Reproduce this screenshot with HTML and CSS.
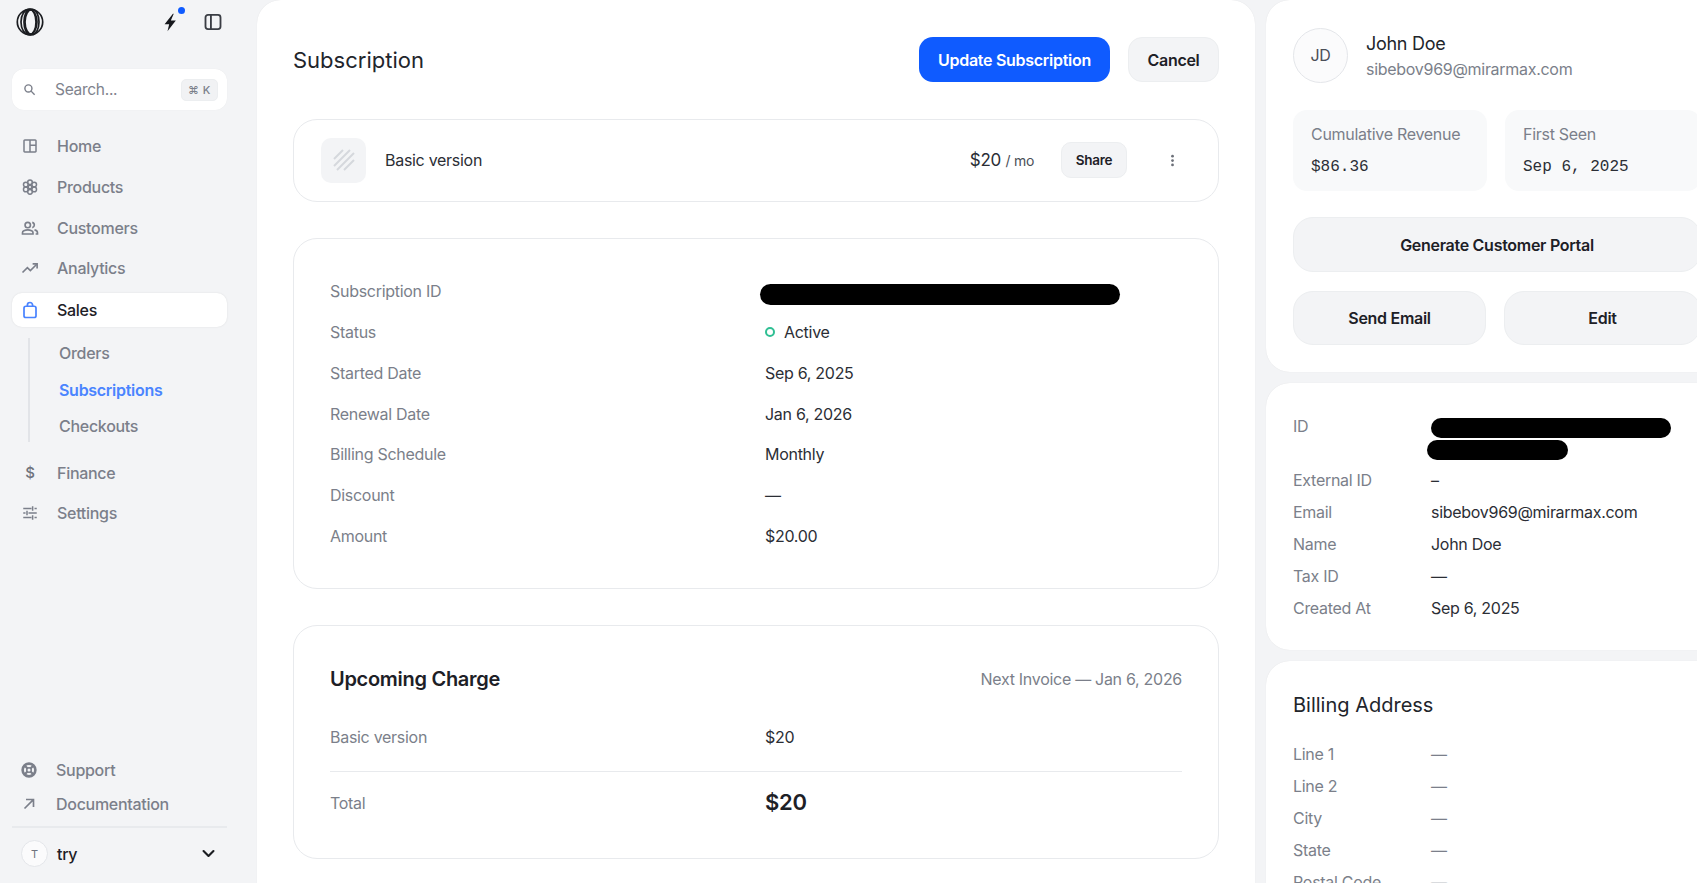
FILE: index.html
```html
<!DOCTYPE html>
<html lang="en">
<head>
<meta charset="utf-8">
<title>Subscription</title>
<link rel="stylesheet" href="styles.css">
</head>
<body>
<div class="app">
  <aside class="sidebar">
    <div class="brand">
      <svg class="logo" viewBox="0 0 28 28" fill="none" stroke="#1b1d21" stroke-width="1.7"><circle cx="14" cy="14" r="12.7"/><ellipse cx="13" cy="14" rx="8" ry="12.7"/><ellipse cx="14" cy="14" rx="6" ry="12.7"/><ellipse cx="16" cy="14" rx="7" ry="12.7"/></svg>
      <span class="bolt-wrap">
        <svg class="bolt" viewBox="0 0 24 24"><path fill="#16181d" d="M15.500 1.500 5.500 14H11l-2 8.500 10-13h-6l3.500-8z"/></svg>
        <i class="dot"></i>
      </span>
      <svg class="panel-icon" viewBox="0 0 24 24" fill="none" stroke="#3a3d44" stroke-width="2.200"><rect x="3" y="3.500" width="18" height="17" rx="3"/><path d="M9.500 3.500v17"/></svg>
    </div>
    <div class="search">
      <svg class="ic-search" viewBox="0 0 24 24" fill="none" stroke="#7b7f8a" stroke-width="2.600"><circle cx="10" cy="10" r="6.500"/><path d="m15 15 6.500 6.500"/></svg>
      <span class="search-text">Search...</span>
      <span class="kbd">⌘ K</span>
    </div>
    <nav class="nav">
      <a class="nav-item"><svg class="ic" viewBox="0 0 24 24"><path fill="currentColor" d="M5 21q-.825 0-1.413-.587Q3 19.825 3 19V5q0-.825.587-1.413Q4.175 3 5 3h14q.825 0 1.413.587Q21 4.175 21 5v14q0 .825-.587 1.413Q19.825 21 19 21ZM5 19h6V5H5Zm8 0h6v-7h-6Zm0-9h6V5h-6Z"/></svg>Home</a>
      <a class="nav-item"><svg class="ic" viewBox="0 0 24 24" fill="none" stroke="currentColor" stroke-width="2"><circle cx="12" cy="5.600" r="3.100"/><circle cx="12" cy="18.400" r="3.100"/><circle cx="6.400" cy="8.800" r="3.100"/><circle cx="17.600" cy="8.800" r="3.100"/><circle cx="6.400" cy="15.200" r="3.100"/><circle cx="17.600" cy="15.200" r="3.100"/><circle cx="12" cy="12" r="2.400"/></svg>Products</a>
      <a class="nav-item"><svg class="ic" viewBox="0 0 24 24" fill="none" stroke="currentColor" stroke-width="2.200"><circle cx="9" cy="8" r="3.600"/><path d="M2 20v-1.600c0-1.200.7-2.200 1.800-2.700 3.300-1.400 7.100-1.400 10.400 0 1.100.5 1.800 1.500 1.800 2.700V20z"/><path d="M15 4.500a3.600 3.600 0 0 1 0 7M18 14.500c2.400.5 4 1.800 4 3.900V20h-2.500"/></svg>Customers</a>
      <a class="nav-item"><svg class="ic" viewBox="0 0 24 24" fill="none" stroke="currentColor" stroke-width="2.200"><path d="m2 18 6.500-6.500 4 4L21 7"/><path d="M15.500 6.500H21.500V12.500"/></svg>Analytics</a>
      <a class="nav-item is-active"><svg class="ic ic-blue" viewBox="0 0 24 24" fill="none" stroke="currentColor" stroke-width="2.300"><rect x="4" y="7" width="16" height="15" rx="2.500"/><path d="M8.500 7V5.500a3.500 3.500 0 0 1 7 0V7"/></svg>Sales</a>
      <div class="subnav">
        <a class="sub-item">Orders</a>
        <a class="sub-item is-current">Subscriptions</a>
        <a class="sub-item">Checkouts</a>
      </div>
      <a class="nav-item"><span class="ic ic-glyph">$</span>Finance</a>
      <a class="nav-item"><svg class="ic" viewBox="0 0 24 24" fill="none" stroke="currentColor" stroke-width="2"><path d="M3 6h11M18 6h3M15.500 3v6M3 12h3M10 12h11M8 9v6M3 18h11M18 18h3M15.500 15v6"/></svg>Settings</a>
    </nav>
    <div class="side-bottom">
      <a class="foot-link"><svg class="ic" viewBox="0 0 24 24" fill="none" stroke="currentColor"><circle cx="12" cy="12" r="8.500" stroke-width="3.500"/><circle cx="12" cy="12" r="3" stroke-width="2"/><path stroke-width="3" d="m6 6 4 4M18 6l-4 4M6 18l4-4M18 18l-4-4"/></svg>Support</a>
      <a class="foot-link"><svg class="ic" viewBox="0 0 24 24" fill="none" stroke="currentColor" stroke-width="2.200"><path d="M6 18 17.500 6.500M8 6h10v10"/></svg>Documentation</a>
      <div class="org">
        <span class="org-avatar">T</span>
        <span class="org-name">try</span>
        <svg class="chev" viewBox="0 0 24 24" fill="none" stroke="#1b1d21" stroke-width="3" stroke-linecap="round" stroke-linejoin="round"><path d="m5 8.500 7 7 7-7"/></svg>
      </div>
    </div>
  </aside>

  <main class="main">
    <header class="main-head">
      <h1 class="title">Subscription</h1>
      <div class="actions">
        <button class="btn btn-primary">Update Subscription</button>
        <button class="btn btn-plain">Cancel</button>
      </div>
    </header>

    <section class="card product">
      <span class="thumb"><svg viewBox="0 0 24 24" fill="none" stroke="#d5d8dd" stroke-width="2"><path d="M2 11 11 2M2 18 18 2M5 22 22 5M12 22l10-10"/></svg></span>
      <span class="product-name">Basic version</span>
      <span class="price">$20 <small>/ mo</small></span>
      <button class="btn-share">Share</button>
      <svg class="kebab" viewBox="0 0 24 24" fill="#6b6f78"><circle cx="12" cy="5" r="2.200"/><circle cx="12" cy="12" r="2.200"/><circle cx="12" cy="19" r="2.200"/></svg>
    </section>

    <section class="card details">
      <div class="row"><span class="label">Subscription ID</span><span class="redact redact-sub"></span></div>
      <div class="row"><span class="label">Status</span><span class="value status"><i class="status-dot"></i>Active</span></div>
      <div class="row"><span class="label">Started Date</span><span class="value">Sep 6, 2025</span></div>
      <div class="row"><span class="label">Renewal Date</span><span class="value">Jan 6, 2026</span></div>
      <div class="row"><span class="label">Billing Schedule</span><span class="value">Monthly</span></div>
      <div class="row"><span class="label">Discount</span><span class="value">—</span></div>
      <div class="row"><span class="label">Amount</span><span class="value">$20.00</span></div>
    </section>

    <section class="card charge">
      <div class="charge-head">
        <h2 class="charge-title">Upcoming Charge</h2>
        <span class="label">Next Invoice — Jan 6, 2026</span>
      </div>
      <div class="row charge-line"><span class="label">Basic version</span><span class="value">$20</span></div>
      <div class="row charge-total"><span class="label">Total</span><span class="total-value">$20</span></div>
    </section>
  </main>

  <aside class="right">
    <section class="r-card customer">
      <div class="who">
        <span class="avatar">JD</span>
        <div class="who-text">
          <div class="who-name">John Doe</div>
          <div class="who-mail">sibebov969@mirarmax.com</div>
        </div>
      </div>
      <div class="stats">
        <div class="stat"><div class="label">Cumulative Revenue</div><div class="mono">$86.36</div></div>
        <div class="stat"><div class="label">First Seen</div><div class="mono">Sep 6, 2025</div></div>
      </div>
      <button class="btn-soft btn-wide">Generate Customer Portal</button>
      <div class="pair">
        <button class="btn-soft">Send Email</button>
        <button class="btn-soft">Edit</button>
      </div>
    </section>

    <section class="r-card info">
      <div class="r-row r-row-id"><span class="label">ID</span><span class="redact-stack"><span class="redact redact-a"></span><span class="redact redact-b"></span></span></div>
      <div class="r-row"><span class="label">External ID</span><span class="value">–</span></div>
      <div class="r-row"><span class="label">Email</span><span class="value">sibebov969@mirarmax.com</span></div>
      <div class="r-row"><span class="label">Name</span><span class="value">John Doe</span></div>
      <div class="r-row"><span class="label">Tax ID</span><span class="value">—</span></div>
      <div class="r-row"><span class="label">Created At</span><span class="value">Sep 6, 2025</span></div>
    </section>

    <section class="r-card billing">
      <h2 class="billing-title">Billing Address</h2>
      <div class="r-row"><span class="label">Line 1</span><span class="dash">—</span></div>
      <div class="r-row"><span class="label">Line 2</span><span class="dash">—</span></div>
      <div class="r-row"><span class="label">City</span><span class="dash">—</span></div>
      <div class="r-row"><span class="label">State</span><span class="dash">—</span></div>
      <div class="r-row"><span class="label">Postal Code</span><span class="dash">—</span></div>
    </section>
  </aside>
</div>
</body>
</html>
```

FILE: styles.css
```css
* { box-sizing: border-box; }
html, body { margin: 0; height: 100%; overflow: hidden; }
body {
  background: #f3f4f6;
  font-family: Inter, "Liberation Sans", sans-serif;
  font-size: 16px;
  letter-spacing: -0.018em;
  color: #1d2026;
}
h1, h2 { margin: 0; font-weight: 500; }
button { font-family: inherit; letter-spacing: inherit; cursor: pointer; }

.app { display: flex; height: 883px; width: 1727px; gap: 11px; }

/* Sidebar */
.sidebar {
  flex: 0 0 246px;
  width: 246px;
  padding: 8px 0 16px 12px;
  display: flex;
  flex-direction: column;
  height: 100%;
}
.brand { display: flex; align-items: center; height: 28px; padding-left: 4px; padding-right: 4px; width: 215px; }
.logo { width: 28px; height: 28px; }
.bolt-wrap { margin-left: auto; position: relative; display: flex; }
.bolt { width: 20px; height: 25px; }
.dot { position: absolute; top: -3px; right: -5px; width: 7px; height: 7px; border-radius: 50%; background: #0f5bff; }
.panel-icon { width: 20px; height: 20px; margin-left: 23px; }

.search {
  margin-top: 33px;
  width: 215px;
  height: 41px;
  background: #fff;
  border-radius: 12px;
  display: flex;
  align-items: center;
  padding: 0 9px 0 11px;
  box-shadow: 0 0 1px rgba(0,0,0,.08);
}
.ic-search { width: 13px; height: 13px; }
.search-text { margin-left: 19px; color: #80838d; font-size: 15.500px; }
.kbd {
  margin-left: auto;
  width: 37px;
  height: 22px;
  border-radius: 5px;
  background: #f1f2f4;
  border: 1px solid #eceef0;
  color: #7b7f8a;
  font-size: 11px;
  font-weight: 500;
  display: flex;
  align-items: center;
  justify-content: center;
  letter-spacing: .5px;
}

.nav { margin-top: 19px; width: 215px; display: flex; flex-direction: column; gap: 6.750px; }
.nav-item {
  height: 34px;
  flex: none;
  display: flex;
  align-items: center;
  gap: 18px;
  padding-left: 9px;
  color: #7b7f8a;
  font-weight: 500;
  border-radius: 10px;
}
.ic { width: 18px; height: 18px; flex: none; }
.ic-glyph { font-size: 15px; text-align: center; line-height: 18px; color: #6f737d; font-weight: 500; }
.is-active { background: #fff; color: #1d2026; box-shadow: 0 0 2px rgba(0,0,0,.1); margin-top: 1px; }
.ic-blue { color: #4a84ff; }
.subnav {
  margin: 4px 0 7px 16px;
  height: 104px;
  flex: none;
  border-left: 2px solid #e2e4e8;
  padding-left: 29px;
  display: flex;
  flex-direction: column;
  justify-content: center;
  gap: 12.500px;
  color: #7b7f8a;
  font-weight: 500;
}
.sub-item { line-height: 24px; }
.is-current { color: #4a84ff; font-weight: 600; }

.side-bottom { margin-top: auto; width: 215px; }
.foot-link {
  height: 34px;
  display: flex;
  align-items: center;
  gap: 18px;
  padding-left: 8px;
  color: #7b7f8a;
  font-weight: 500;
}
.org {
  margin-top: 5px;
  padding: 12px 10px 0 9px;
  border-top: 2px solid #e8eaed;
  display: flex;
  align-items: center;
}
.org-avatar {
  width: 27px;
  height: 27px;
  border-radius: 50%;
  border: 1px solid #e4e6ea;
  background: #fbfbfc;
  color: #6f737d;
  font-size: 11px;
  display: flex;
  align-items: center;
  justify-content: center;
}
.org-name { margin-left: 9px; font-weight: 500; }
.chev { margin-left: auto; width: 17px; height: 17px; }

/* Main */
.main {
  flex: 0 0 998px;
  height: 100%;
  background: #fff;
  border-radius: 24px 24px 0 0;
  padding: 37px 36px 0;
  box-shadow: 0 0 1px rgba(0,0,0,.1);
}
.main-head { display: flex; align-items: center; justify-content: space-between; height: 45px; }
.title { font-size: 22px; font-weight: 400; color: #22252b; letter-spacing: 0; }
.actions { display: flex; gap: 18px; }
.btn { height: 45px; border-radius: 14px; font-size: 16px; font-weight: 600; border: 1px solid transparent; }
.btn-primary { width: 191px; background: #0f5bff; color: #fff; padding: 0; }
.btn-plain { width: 91px; background: #f3f4f6; color: #1d2026; border-color: #eceef0; padding: 0; }

.card { background: #fff; border: 1px solid #e8eaed; border-radius: 24px; }
.product {
  margin-top: 37px;
  height: 83px;
  display: flex;
  align-items: center;
  padding: 0 38px 1px 27px;
}
.thumb { width: 45px; height: 45px; background: #f3f4f6; border-radius: 10px; display: flex; align-items: center; justify-content: center; }
.thumb svg { width: 24px; height: 24px; }
.product-name { margin-left: 19px; font-weight: 400; color: #2b2e35; }
.price { margin-left: auto; font-size: 17px; color: #2b2e35; }
.price small { font-size: 14px; color: #4b4f57; }
.btn-share {
  margin-left: 27px;
  width: 66px;
  height: 36px;
  font-size: 13.500px;
  font-weight: 600;
  color: #1d2026;
  background: #f3f4f6;
  border: 1px solid #eceef0;
  border-radius: 10px;
  padding: 0;
}
.kebab { margin-left: 38px; width: 15px; height: 15px; }

.details { margin-top: 36px; height: 351px; padding: 32px 36px; }
.row { display: grid; grid-template-columns: 435px 1fr; align-items: center; height: 40.750px; }
.label { color: #7b7f8a; }
.value { color: #2b2e35; }
.redact { display: block; background: #000; border-radius: 11px; height: 20px; }
.redact-sub { width: 360px; margin-left: -5px; margin-top: 7px; height: 21px; }
.status { display: flex; align-items: center; gap: 9px; }
.status-dot { width: 10px; height: 10px; border: 2px solid #2fbf93; border-radius: 50%; }

.charge { margin-top: 36px; height: 234px; padding: 39px 36px 0; }
.charge-head { display: flex; justify-content: space-between; align-items: center; height: 28px; margin-bottom: 28px; }
.charge-title { font-size: 20px; font-weight: 600; color: #1d2026; }
.charge-line { height: 32px; margin-bottom: 18px; }
.charge-total { border-top: 1px solid #e8eaed; padding-top: 15px; height: 48px; }
.total-value { font-size: 22px; font-weight: 600; margin-top: -2px; }

/* Right column */
.right { flex: 0 0 461px; display: flex; flex-direction: column; gap: 11px; }
.r-card { flex: none; background: #fff; border-radius: 24px 0 0 24px; padding: 0 27px; box-shadow: 0 0 1px rgba(0,0,0,.1); }
.customer { height: 372px; padding-top: 28px; }
.who { display: flex; align-items: center; gap: 18px; height: 54px; }
.avatar {
  width: 55px;
  height: 55px;
  border-radius: 50%;
  border: 1px solid #e4e6ea;
  background: #fbfbfc;
  color: #4b4f57;
  font-size: 16px;
  display: flex;
  align-items: center;
  justify-content: center;
}
.who-text { padding-top: 3px; }
.who-name { font-size: 18px; line-height: 24px; color: #22252b; }
.who-mail { margin-top: 1px; line-height: 24px; color: #7b7f8a; }
.stats { margin-top: 28px; display: grid; grid-template-columns: 194px 1fr; gap: 18px; }
.stat { height: 81px; background: #f8f9fa; border-radius: 14px; padding: 12px 18px; }
.stat .label { line-height: 24px; }
.mono { margin-top: 9px; font-family: "Liberation Mono", monospace; line-height: 24px; letter-spacing: 0; color: #2b2e35; }
.btn-soft {
  height: 54px;
  border: 1px solid #eceef0;
  background: #f3f4f6;
  border-radius: 20px;
  font-size: 16px;
  font-weight: 600;
  color: #1d2026;
  padding: 0;
}
.btn-wide { display: block; width: 408px; height: 55px; margin-top: 26px; }
.pair { margin-top: 19px; display: grid; grid-template-columns: 193px 197px; gap: 18px; }

.info { height: 267px; padding-top: 31px; }
.r-row { display: grid; grid-template-columns: 138px 1fr; align-items: center; height: 32px; }
.r-row-id { height: 50px; align-items: start; }
.r-row-id .label { line-height: 24px; }
.redact-stack { display: flex; flex-direction: column; gap: 2px; padding-top: 4px; }
.redact-a { width: 240px; }
.redact-b { width: 141px; margin-left: -4px; }
.billing { height: 260px; padding-top: 31px; border-radius: 24px 0 0 0; }
.billing-title { font-size: 20px; line-height: 26px; font-weight: 400; letter-spacing: 0; margin-bottom: 20px; color: #22252b; }
.dash { color: #7b7f8a; }
```
